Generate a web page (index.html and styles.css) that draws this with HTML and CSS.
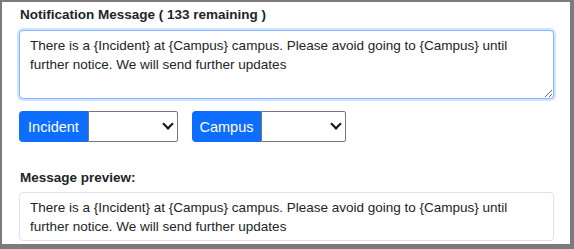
FILE: index.html
```html
<!DOCTYPE html>
<html lang="en">
<head>
    <meta charset="UTF-8">
    <meta name="viewport" content="width=device-width, initial-scale=1.0">
    <title>Notification</title>
    <link rel="stylesheet" href="styles.css">
</head>
<body>
    <div class="panel">
        <label class="field-label" for="message">Notification Message ( 133 remaining )</label>
        <textarea id="message" class="message-input">There is a {Incident} at {Campus} campus. Please avoid going to {Campus} until further notice. We will send further updates</textarea>

        <div class="tokens">
            <div class="token-group">
                <span class="token-btn">Incident</span>
                <span class="select-wrap">
                    <select class="token-select"><option></option></select>
                </span>
            </div>
            <div class="token-group">
                <span class="token-btn">Campus</span>
                <span class="select-wrap narrow">
                    <select class="token-select"><option></option></select>
                </span>
            </div>
        </div>

        <div class="field-label preview-label">Message preview:</div>
        <div class="preview">There is a {Incident} at {Campus} campus. Please avoid going to {Campus} until further notice. We will send further updates</div>
    </div>
</body>
</html>
```

FILE: styles.css
```css
html, body {
    margin: 0;
    height: 100%;
}
body {
    background-color: #7b7b7b;
    font-family: "Liberation Sans", Arial, sans-serif;
    font-size: 13.5px;
    color: #212529;
    padding: 2px 4px 5px 2px;
    box-sizing: border-box;
}
.panel {
    background: #ffffff;
    height: 100%;
    padding: 3px 16px 0 17px;
    box-sizing: border-box;
}
.field-label {
    display: block;
    font-weight: bold;
    line-height: 20px;
    margin: 0 0 5px 1px;
}
.message-input {
    display: block;
    width: 100%;
    height: 69px;
    box-sizing: border-box;
    margin: 0;
    padding: 5px 10px;
    font: inherit;
    line-height: 19px;
    color: #212529;
    border: 1px solid #86b7fe;
    border-radius: 4px;
    box-shadow: 0 0 0 2px rgba(13, 110, 253, 0.2);
    outline: none;
    resize: vertical;
}
.tokens {
    display: flex;
    gap: 14px;
    margin-top: 12px;
}
.token-group {
    display: flex;
    height: 31px;
}
.token-btn {
    display: flex;
    align-items: center;
    justify-content: center;
    width: 69px;
    font-size: 14.5px;
    background-color: #0d6efd;
    color: #ffffff;
    border-radius: 4px 0 0 4px;
}
.select-wrap {
    position: relative;
    width: 90px;
}
.select-wrap.narrow {
    width: 85px;
}
.select-wrap::after {
    content: "";
    position: absolute;
    right: 6px;
    top: 9px;
    width: 6px;
    height: 6px;
    border-right: 2.5px solid #111;
    border-bottom: 2.5px solid #111;
    transform: rotate(45deg);
    pointer-events: none;
}
.token-select {
    appearance: none;
    width: 100%;
    height: 100%;
    margin: 0;
    background: #ffffff;
    border: 1px solid #767676;
    border-radius: 0 2px 2px 0;
    font: inherit;
}
.preview-label {
    margin-top: 26px;
    margin-bottom: 4px;
}
.preview {
    border: 1px solid #dee2e6;
    border-radius: 4px;
    padding: 5px 10px 4px;
    line-height: 19px;
}
```
